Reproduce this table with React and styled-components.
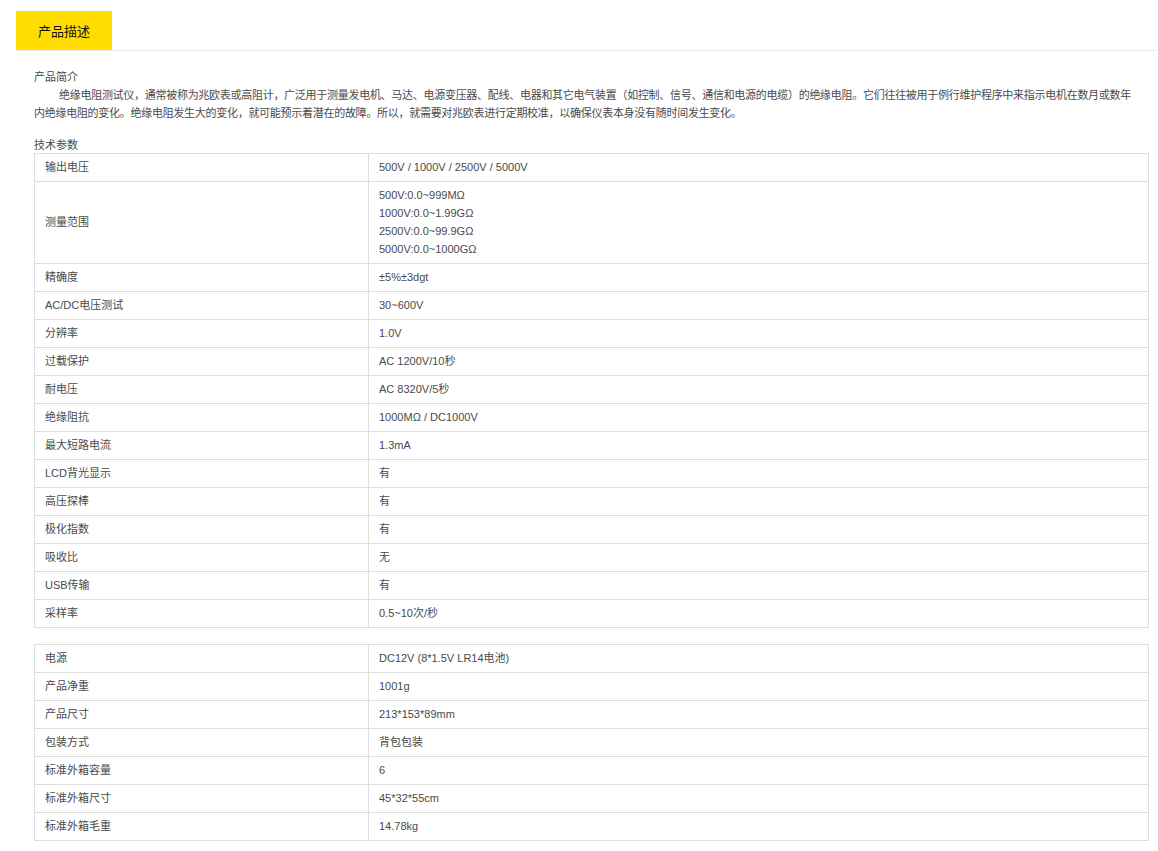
import React from "react";
import styled, { createGlobalStyle } from "styled-components";

const Global = createGlobalStyle`
  html, body { margin: 0; padding: 0; background: #fff; }
  body { font-family: "Liberation Sans", Arial, "Noto Sans CJK SC", sans-serif; }
`;

const Page = styled.div`
  padding-top: 11px;
  width: 1158px;
`;

const TabBar = styled.div`
  display: flex;
  margin-left: 16px;
  width: 1141px;
  border-bottom: 1px solid #eaeaea;
`;

const Tab = styled.div`
  width: 96px;
  height: 39px;
  background: ${(p) => (p.$active ? "#ffdd00" : "transparent")};
  color: #111;
  font-size: 13px;
  display: flex;
  align-items: center;
  justify-content: center;
`;

const Content = styled.div`
  padding: 17px 0 0 34px;
  font-size: 11px;
  line-height: 18px;
  color: #4a4a4a;
`;

const Heading = styled.div`
  color: #4a4a4a;
  line-height: ${(p) => p.$lh || 18}px;
`;

const Para = styled.p`
  margin: 0 0 16px;
  width: 1102px;
  text-indent: 25px;
  letter-spacing: -0.28px;
`;

const Table = styled.table`
  width: 1115px;
  border-collapse: collapse;
  margin-bottom: ${(p) => p.$gap || 0}px;
  table-layout: fixed;
`;

const Cell = styled.td`
  border: 1px solid #dddddd;
  padding: 4px 10px 5px;
  vertical-align: middle;
  color: #4a4a4a;
  font-size: 11px;
  line-height: 18px;
  width: ${(p) => p.$w || "auto"};
`;

const specs1 = [
  ["输出电压", ["500V / 1000V / 2500V / 5000V"]],
  ["测量范围", ["500V:0.0~999MΩ", "1000V:0.0~1.99GΩ", "2500V:0.0~99.9GΩ", "5000V:0.0~1000GΩ"]],
  ["精确度", ["±5%±3dgt"]],
  ["AC/DC电压测试", ["30~600V"]],
  ["分辨率", ["1.0V"]],
  ["过载保护", ["AC 1200V/10秒"]],
  ["耐电压", ["AC 8320V/5秒"]],
  ["绝缘阻抗", ["1000MΩ / DC1000V"]],
  ["最大短路电流", ["1.3mA"]],
  ["LCD背光显示", ["有"]],
  ["高压探棒", ["有"]],
  ["极化指数", ["有"]],
  ["吸收比", ["无"]],
  ["USB传输", ["有"]],
  ["采样率", ["0.5~10次/秒"]],
];

const specs2 = [
  ["电源", ["DC12V (8*1.5V LR14电池)"]],
  ["产品净重", ["1001g"]],
  ["产品尺寸", ["213*153*89mm"]],
  ["包装方式", ["背包包装"]],
  ["标准外箱容量", ["6"]],
  ["标准外箱尺寸", ["45*32*55cm"]],
  ["标准外箱毛重", ["14.78kg"]],
];

function SpecTable({ rows, gap }) {
  return (
    <Table $gap={gap}>
      <tbody>
        {rows.map(([k, vals]) => (
          <tr key={k}>
            <Cell $w="313px">{k}</Cell>
            <Cell>
              {vals.map((v, i) => (
                <div key={i}>{v}</div>
              ))}
            </Cell>
          </tr>
        ))}
      </tbody>
    </Table>
  );
}

export default function App() {
  return (
    <Page>
      <Global />
      <TabBar>
        <Tab $active>产品描述</Tab>
      </TabBar>
      <Content>
        <Heading>产品简介</Heading>
        <Para>
          绝缘电阻测试仪，通常被称为兆欧表或高阻计，广泛用于测量发电机、马达、电源变压器、配线、电器和其它电气装置（如控制、信号、通信和电源的电缆）的绝缘电阻。它们往往被用于例行维护程序中来指示电机在数月或数年内绝缘电阻的变化。绝缘电阻发生大的变化，就可能预示着潜在的故障。所以，就需要对兆欧表进行定期校准，以确保仪表本身没有随时间发生变化。
        </Para>
        <Heading $lh={15}>技术参数</Heading>
        <SpecTable rows={specs1} gap={16} />
        <SpecTable rows={specs2} gap={0} />
      </Content>
    </Page>
  );
}
